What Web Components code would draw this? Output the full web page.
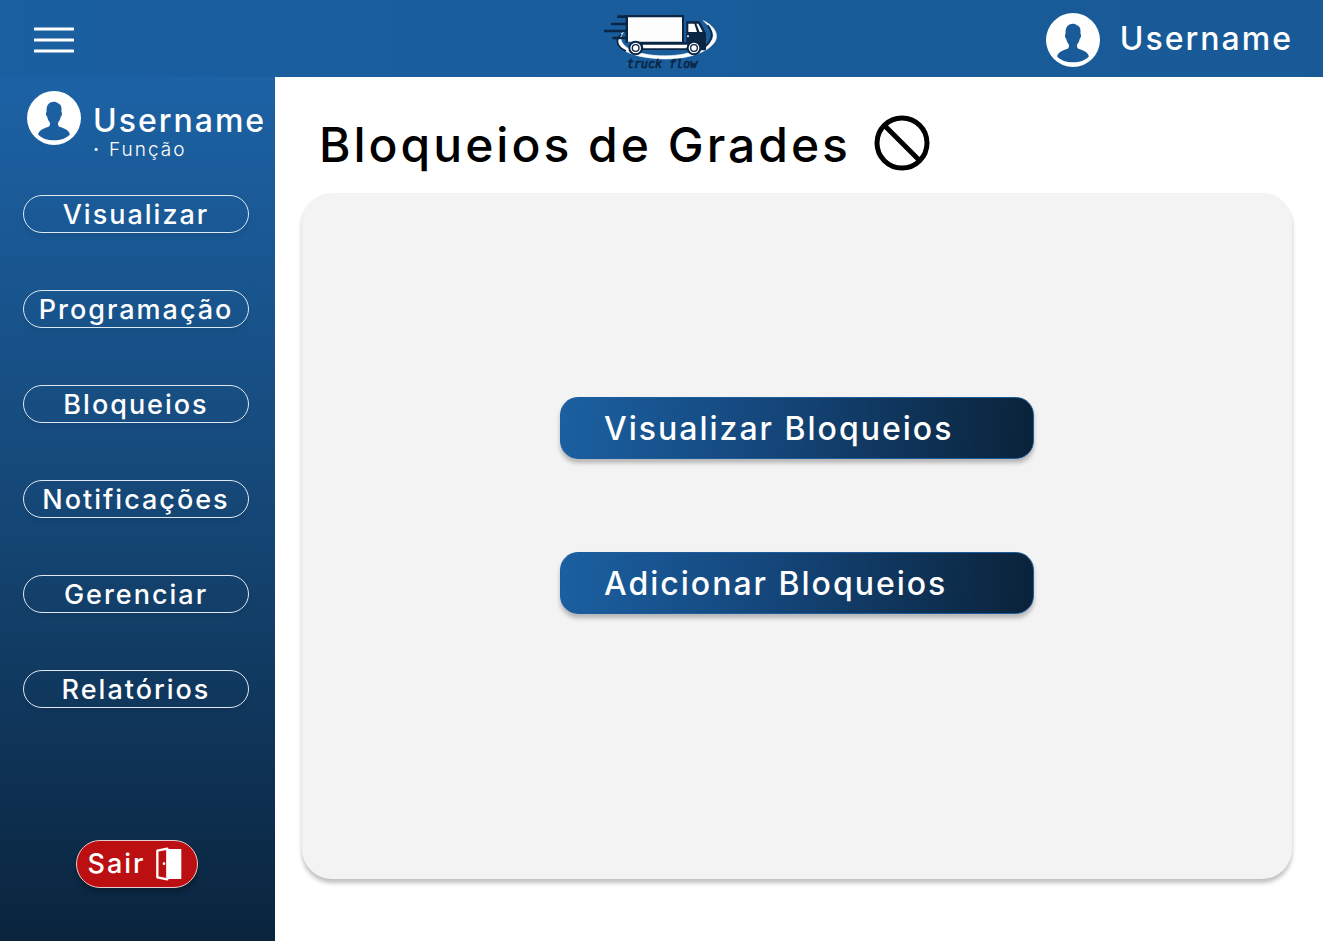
<!DOCTYPE html>
<html lang="pt-BR">
<head>
<meta charset="utf-8">
<meta name="viewport" content="width=device-width, initial-scale=1">
<title>Bloqueios de Grades</title>
<style>
  body { margin: 0; background: #fff; font-family: Inter, "Liberation Sans", sans-serif; letter-spacing: 2px; }
</style>
</head>
<body>
<truck-app>
  <app-header slot="header">Username</app-header>
  <side-bar slot="sidebar">
    <user-card slot="user" role-name="Função">Username</user-card>
    <nav-button>Visualizar</nav-button>
    <nav-button>Programação</nav-button>
    <nav-button>Bloqueios</nav-button>
    <nav-button>Notificações</nav-button>
    <nav-button>Gerenciar</nav-button>
    <nav-button>Relatórios</nav-button>
    <exit-button slot="exit">Sair</exit-button>
  </side-bar>
  <page-title>Bloqueios de Grades</page-title>
  <content-panel>
    <action-button>Visualizar Bloqueios</action-button>
    <action-button>Adicionar Bloqueios</action-button>
  </content-panel>
</truck-app>
<script>
function define(name, markup, setup) {
  const template = document.createElement('template');
  template.innerHTML = markup;
  customElements.define(name, class extends HTMLElement {
    constructor() {
      super();
      this.attachShadow({ mode: 'open' }).append(template.content.cloneNode(true));
    }
    connectedCallback() { if (setup) setup(this); }
  });
}

define('truck-app', `
  <style>
    :host { display: grid; grid-template: auto 1fr / 275px 1fr; min-height: 100vh; }
    .header { grid-column: 1 / -1; }
    .sidebar { display: grid; }
    main { display: flex; flex-direction: column; padding: 32px 31px 62px 27px; }
  </style>
  <div class="header"><slot name="header"></slot></div>
  <div class="sidebar"><slot name="sidebar"></slot></div>
  <main><slot></slot></main>`);

define('user-avatar', `
  <style>
    :host { display: block; width: 54px; height: 54px; flex: none; }
    svg { display: block; width: 100%; height: 100%; }
  </style>
  <svg viewBox="0 0 160 160" aria-hidden="true">
    <path fill="#fff" fill-rule="evenodd" d="M80 0a80 80 0 1 1 0 160a80 80 0 0 1 0-160Z
      M80 32C64 33 57 42 58 62C55 63 56 74 60 76C61 84 65 89 68 94C69 101 67 105 62 107C48 111 35 117 33 129C44 141 60 146 80 146C100 146 116 141 127 129C125 117 112 111 98 107C93 105 91 101 92 94C95 89 99 84 100 76C104 74 105 63 102 62C104 46 100 38 91 36C88 33 84 32 80 32Z"/>
  </svg>`);

define('truck-logo', `
  <style>
    :host { display: block; width: 146px; height: 76px; }
    svg { display: block; width: 100%; height: 100%; }
    text { font: italic 35px "DejaVu Sans Mono", monospace; letter-spacing: 0; }
  </style>
  <svg viewBox="0 0 438 228" role="img" aria-label="truck flow">
    <g>
      <path d="M98 90C62 114 78 157 180 168C290 181 370 144 376 107C379 86 361 67 337 56C357 75 371 89 366 107C356 138 280 169 188 160C105 151 74 119 98 90Z" fill="#fff" stroke="#fff" stroke-width="2"/>
      <path d="M91 97C70 114 79 137 105 147" fill="none" stroke="#0b2545" stroke-width="5"/>
      <path d="M350 70C374 98 359 131 320 146" fill="none" stroke="#0b2545" stroke-width="5"/>
      <path d="M79 44H108M60 66H108M39 87H108M64 108H108" stroke="#0b2545" stroke-width="8"/>
      <path d="M104 39H279V121H286V58H326L345 94V145H330C326 116 291 114 288 144H154C151 110 115 110 104 126Z" fill="#0b2545"/>
      <path d="M111 46H273V119H111Z" fill="#fcfdfc"/>
      <path d="M155 128H291L286 139H157Z" fill="#fff"/>
      <path d="M292 65H310L318 90H292ZM316 65H322L335 90H326Z" fill="#fff"/>
      <circle cx="291" cy="103" r="3" fill="#fff"/>
      <g fill="#fff" stroke="#0b2545">
        <circle cx="134" cy="138" r="19" stroke-width="6"/><circle cx="134" cy="138" r="10" stroke-width="4"/>
        <circle cx="309" cy="138" r="19" stroke-width="6"/><circle cx="309" cy="138" r="10" stroke-width="4"/>
      </g>
    </g>
    <text x="108" y="199" fill="#0b2545" stroke="#0b2545" stroke-width="2">truck flow</text>
  </svg>`);

define('app-header', `
  <style>
    header { display: grid; grid-template-columns: 1fr auto 1fr; align-items: center; height: 77px; box-sizing: border-box; padding: 2px 30px 0 34px; color: #fff; background: linear-gradient(90deg, #1a5fa0, #185a97); }
    button { width: 40px; padding: 0; border: 0; background: none; cursor: pointer; }
    svg { display: block; }
    .user { display: flex; align-items: center; justify-content: flex-end; gap: 20px; font-size: 32px; line-height: 36px; font-weight: 500; }
    .name { padding-bottom: 2px; }
  </style>
  <header>
    <button type="button" aria-label="Menu">
      <svg width="40" height="26" viewBox="0 0 40 26"><path d="M1 2H39M1 13H39M1 24H39" stroke="#fff" stroke-width="3" stroke-linecap="round"/></svg>
    </button>
    <truck-logo></truck-logo>
    <div class="user"><user-avatar></user-avatar><span class="name"><slot></slot></span></div>
  </header>`);

define('side-bar', `
  <style>
    :host { display: block; background: linear-gradient(#1c62a5, #154776 50%, #0a243d); }
    aside { display: flex; flex-direction: column; height: 100%; box-sizing: border-box; padding: 14px 0 53px; }
    nav { display: flex; flex-direction: column; gap: 57px; margin: 34px 26px 40px 23px; }
    .exit { display: flex; justify-content: center; margin: auto 2px 0 0; }
  </style>
  <aside>
    <slot name="user"></slot>
    <nav aria-label="Principal"><slot></slot></nav>
    <div class="exit"><slot name="exit"></slot></div>
  </aside>`);

define('user-card', `
  <style>
    :host { display: flex; align-items: flex-start; gap: 12px; height: 70px; padding-left: 27px; color: #fff; }
    .text { padding-top: 12px; }
    .name { font-size: 32px; line-height: 36px; font-weight: 500; }
    .role { display: flex; gap: 8px; font-size: 19px; line-height: 22px; font-weight: 300; }
    .role::before { content: "·"; font-weight: 600; }
  </style>
  <user-avatar></user-avatar>
  <div class="text">
    <div class="name"><slot></slot></div>
    <div class="role"></div>
  </div>`, el => {
  el.shadowRoot.querySelector('.role').textContent = el.getAttribute('role-name');
});

define('nav-button', `
  <style>
    :host { display: block; }
    button { display: block; width: 100%; height: 38px; padding: 0; border: 1px solid #dfe8f2; border-radius: 19px; background: none; box-shadow: 0 4px 4px rgba(0,0,0,.06); color: #fff; font: 500 27px/38px Inter, "Liberation Sans", sans-serif; letter-spacing: inherit; cursor: pointer; }
  </style>
  <button type="button"><slot></slot></button>`);

define('exit-button', `
  <style>
    button { display: flex; align-items: center; justify-content: center; gap: 10px; width: 122px; height: 48px; padding: 0 4px 0 0; border: 1px solid #e8c9cb; border-radius: 24px; background: #bb0f11; box-shadow: 0 4px 4px rgba(0,0,0,.25); color: #fff; font: 500 27px/38px Inter, "Liberation Sans", sans-serif; letter-spacing: inherit; cursor: pointer; }
  </style>
  <button type="button"><slot></slot>
    <svg width="26" height="34" viewBox="0 0 78 102" aria-hidden="true">
      <path d="M36 6H76V96H36Z" fill="#fff"/>
      <path d="M4 11L34 5V97L4 91Z" fill="#bb0f11" stroke="#fff" stroke-width="7" stroke-linejoin="round"/>
      <circle cx="24" cy="50" r="4" fill="#fff"/>
    </svg>
  </button>`);

define('page-title', `
  <style>
    :host { display: flex; align-items: center; gap: 23px; height: 84px; padding-left: 17px; box-sizing: border-box; padding-bottom: 16px; }
    h1 { margin: 0; padding-top: 4px; font-size: 48px; line-height: 56px; font-weight: 500; letter-spacing: 3px; color: #000; }
    svg { display: block; flex: none; }
  </style>
  <h1><slot></slot></h1>
  <svg width="56" height="56" viewBox="0 0 56 56" fill="none" stroke="#000" stroke-width="5" aria-hidden="true">
    <circle cx="28" cy="28" r="25"/><path d="M10 10L46 46"/>
  </svg>`);

define('content-panel', `
  <style>
    :host { display: flex; flex: 1; flex-direction: column; align-items: center; gap: 93px; box-sizing: border-box; padding: 204px 24px 60px; border-radius: 30px; background: #f3f3f3; box-shadow: 0 4px 4px rgba(0,0,0,.25); }
  </style>
  <slot></slot>`);

define('action-button', `
  <style>
    :host { display: block; width: 474px; max-width: 100%; }
    button { display: block; width: 100%; height: 62px; padding: 2px 43px 0; border: 1px solid #1c5c9c; border-radius: 18px; background: linear-gradient(95deg, #1b60a2, #14467a 45%, #0a2239) border-box; box-shadow: 0 4px 4px rgba(0,0,0,.25); color: #fff; font: 500 32px/36px Inter, "Liberation Sans", sans-serif; letter-spacing: inherit; text-align: left; cursor: pointer; }
  </style>
  <button type="button"><slot></slot></button>`);
</script>
</body>
</html>
